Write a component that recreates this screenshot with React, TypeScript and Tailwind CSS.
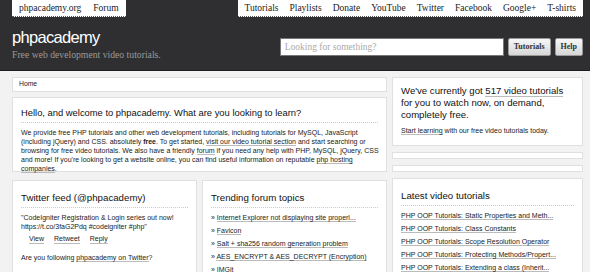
const topLinks = ["Tutorials", "Playlists", "Donate", "YouTube", "Twitter", "Facebook", "Google+", "T-shirts"];

const forumTopics = [
  "Internet Explorer not displaying site properl...",
  "Favicon",
  "Salt + sha256 random generation problem",
  "AES_ENCRYPT & AES_DECRYPT (Encryption)",
  "IMGit",
];

const latestVideos = [
  "PHP OOP Tutorials: Static Properties and Meth...",
  "PHP OOP Tutorials: Class Constants",
  "PHP OOP Tutorials: Scope Resolution Operator",
  "PHP OOP Tutorials: Protecting Methods/Propert...",
  "PHP OOP Tutorials: Extending a class (Inherit...",
];

const serif = "font-['Georgia','Liberation_Serif',serif]";
const sans = "font-['Tahoma','Liberation_Sans',sans-serif]";

function Link({ children }: { children: React.ReactNode }) {
  return <span className="border-b border-[#bbb]">{children}</span>;
}

function BoxTitle({ children }: { children: React.ReactNode }) {
  return (
    <h2 className="text-[9.7px] leading-[13px] text-[#111] pb-[3px] mb-[5px] border-b border-dotted border-[#ccc]">
      {children}
    </h2>
  );
}

export default function App() {
  return (
    <div className={`w-[590px] h-[272px] overflow-hidden bg-[#f2f2f2] ${sans}`}>
      <header className="h-[71px] bg-[#2f2f31] border-b border-[#1c1c1c]">
        <div className="ml-[12px] w-[571px]">
          <div className="flex justify-between">
            <nav className={`h-[17px] bg-white border-b border-dotted border-[#555] flex items-center gap-[12px] px-[7px] text-[9.5px] text-[#222] ${serif}`}>
              <span>phpacademy.org</span>
              <span>Forum</span>
            </nav>
            <nav className={`h-[17px] bg-white border-b border-dotted border-[#555] flex items-center gap-[11px] px-[7px] text-[9.5px] text-[#222] ${serif}`}>
              {topLinks.map((l) => (
                <span key={l}>{l}</span>
              ))}
            </nav>
          </div>
          <div className="flex justify-between items-start">
            <div className="pt-[10px]">
              <div className="text-white text-[16.5px] leading-[20px] tracking-[-0.7px]">phpacademy</div>
              <div className={`mt-[2px] text-[#9a9a9a] text-[9.7px] leading-[12px] ${serif}`}>Free web development video tutorials.</div>
            </div>
            <div className={`flex gap-[4px] mt-[21px] ${serif}`}>
              <div className="w-[224px] h-[18px] bg-white border border-[#777] flex items-center px-[4px] text-[9.5px] text-[#aaa]">
                Looking for something?
              </div>
              <button className="h-[18px] px-[5px] bg-gradient-to-b from-[#f7f7f7] to-[#d6d6d6] border border-[#999] rounded-[2px] text-[8px] font-bold text-[#333]">
                Tutorials
              </button>
              <button className="h-[18px] px-[5px] bg-gradient-to-b from-[#f7f7f7] to-[#d6d6d6] border border-[#999] rounded-[2px] text-[8px] font-bold text-[#333]">
                Help
              </button>
            </div>
          </div>
        </div>
      </header>

      <main className="ml-[12px] w-[571px] pt-[6px] flex gap-[5px] text-[#222]">
        <div className="w-[375px] flex flex-col gap-[5px]">
          <div className="h-[15px] bg-white border border-[#e0e0e0] flex items-center px-[6px] text-[6.8px]">Home</div>
          <div className="h-[75px] bg-white border border-[#e0e0e0] px-[8px] pt-[8px]">
            <h2 className="text-[9.4px] leading-[13px] text-[#111] pb-[3px] mb-[5px] border-b border-dotted border-[#ccc]">
              Hello, and welcome to phpacademy. What are you looking to learn?
            </h2>
            <p className="text-[7px] leading-[9px] whitespace-nowrap">
              We provide free PHP tutorials and other web development tutorials, including tutorials for MySQL, JavaScript
              <br />
              (including jQuery) and CSS. absolutely <b>free</b>. To get started, <Link>visit our video tutorial section</Link> and start searching or
              <br />
              browsing for free video tutorials. We also have a friendly <Link>forum</Link> if you need any help with PHP, MySQL, jQuery, CSS
              <br />
              and more! If you're looking to get a website online, you can find useful information on reputable <Link>php hosting</Link>
              <br />
              <Link>companies</Link>.
            </p>
          </div>
          <div className="flex gap-[5px] mt-[3px]">
            <div className="w-[185px] h-[100px] bg-white border border-[#e0e0e0] px-[8px] pt-[10px]">
              <BoxTitle>Twitter feed (@phpacademy)</BoxTitle>
              <p className="text-[7px] leading-[9px]">
                "CodeIgniter Registration &amp; Login series out now!
                <br />
                https://t.co/3faG2Pdq #codeigniter #php"
              </p>
              <div className="flex gap-[10px] pl-[8px] mt-[3px] text-[7px] leading-[9px]">
                <Link>View</Link>
                <Link>Retweet</Link>
                <Link>Reply</Link>
              </div>
              <p className="mt-[9px] text-[7px] leading-[9px]">
                Are you following <Link>phpacademy on Twitter</Link>?
              </p>
            </div>
            <div className="w-[185px] h-[100px] bg-white border border-[#e0e0e0] px-[8px] pt-[10px]">
              <BoxTitle>Trending forum topics</BoxTitle>
              <ul className="flex flex-col gap-[4px] text-[7px] leading-[9px]">
                {forumTopics.map((t) => (
                  <li key={t}>
                    » <Link>{t}</Link>
                  </li>
                ))}
              </ul>
            </div>
          </div>
        </div>

        <div className="w-[191px] flex flex-col gap-[6px]">
          <div className="h-[69px] bg-white border border-[#e0e0e0] px-[8px] pt-[7px]">
            <p className="text-[9.6px] leading-[12px] text-[#111] whitespace-nowrap">
              We've currently got <Link>517 video tutorials</Link>
              <br />
              for you to watch now, on demand,
              <br />
              completely free.
            </p>
            <p className="mt-[5px] text-[7px] leading-[9px]">
              <Link>Start learning</Link> with our free video tutorials today.
            </p>
          </div>
          <div className="h-[7px] bg-white border border-[#e0e0e0]" />
          <div className="h-[7px] bg-white border border-[#e0e0e0]" />
          <div className="h-[100px] bg-white border border-[#e0e0e0] px-[8px] pt-[10px]">
            <BoxTitle>Latest video tutorials</BoxTitle>
            <ul className="flex flex-col gap-[4px] text-[7px] leading-[9px]">
              {latestVideos.map((t) => (
                <li key={t}>
                  <Link>{t}</Link>
                </li>
              ))}
            </ul>
          </div>
        </div>
      </main>
    </div>
  );
}
